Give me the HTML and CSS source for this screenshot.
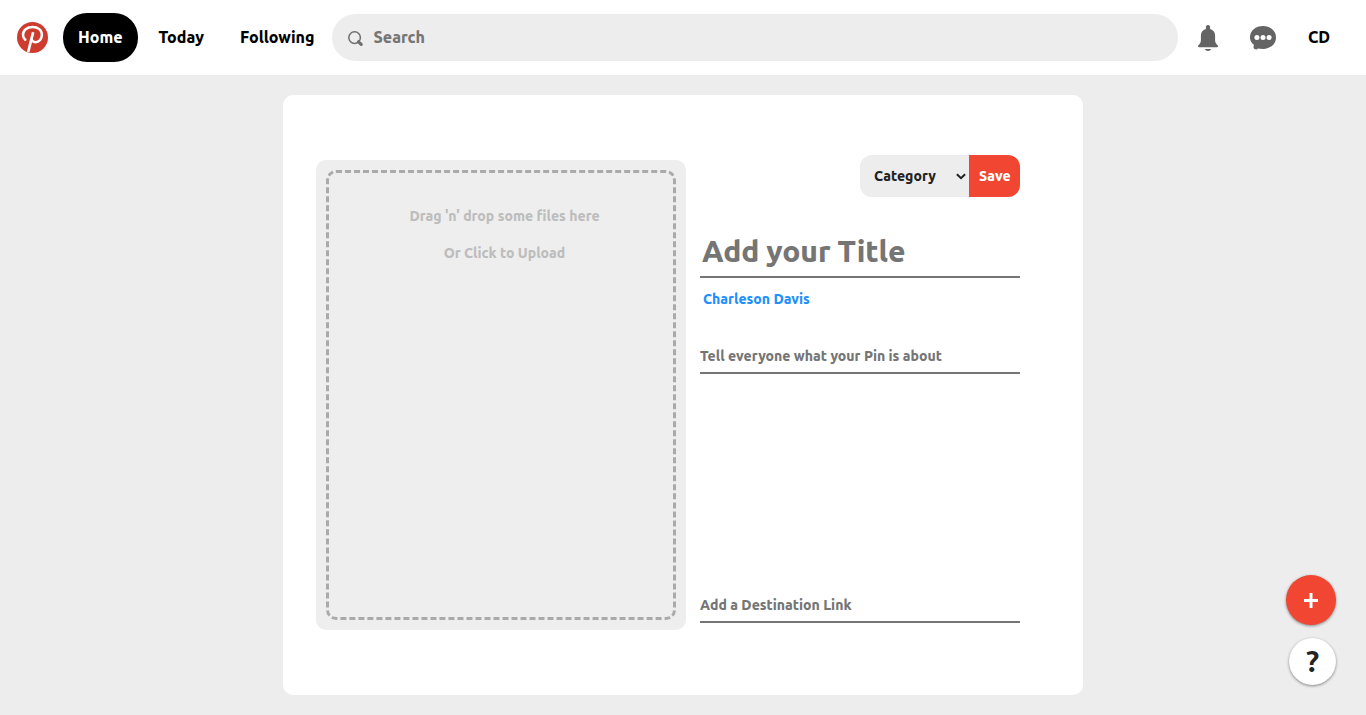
FILE: index.html
```html
<!DOCTYPE html>
<html lang="en">
<head>
<meta charset="utf-8">
<title>Pin Builder</title>
<link rel="stylesheet" href="styles.css">
</head>
<body>
<header class="navbar">
  <a class="logo" aria-label="Home">
    <svg width="31" height="31" viewBox="0 0 31 31"><circle cx="15.500" cy="15.500" r="15.500" fill="#cd3c2e"/><g fill="none" stroke="#fff" stroke-linecap="round" stroke-linejoin="round"><path stroke-width="2.500" d="M8.300 17.700C6.600 16.200 6 14.600 6 12.700 6 8.300 10 5 15.600 5c5.400 0 9.300 3.100 9.300 7.700 0 4.300-2.800 7.500-6.300 7.500-1.900 0-3.300-1.100-3.900-2.600"/><path stroke-width="2.700" stroke-linecap="butt" d="M16.100 10.200L11.200 30"/></g></svg>
  </a>
  <a class="home"><span>Home</span></a>
  <a class="today"><span>Today</span></a>
  <a class="following"><span>Following</span></a>
  <div class="search">
    <svg width="16" height="16" viewBox="0 0 16 16" fill="none" stroke="#6f6f6f"><circle cx="6.6" cy="6.6" r="5.8" stroke-width="1.5"/><path d="M10.500 10.800L13.200 13.400" stroke-width="3.200" stroke-linecap="round"/></svg>
    <span>Search</span>
  </div>
  <svg class="bell" width="20" height="26" viewBox="0 0 20 26" fill="#646464"><path d="M10 0c1.250 0 2.100.9 2.100 2.100v1.900c3.300.9 5 3.400 5 6.600v4.400c0 2.300.6 3.600 2.500 5.200.8.8.4 2.100-.8 2.100H1.200C0 22.300-.4 21 .4 20.200 2.300 18.600 2.900 17.300 2.900 15v-4.400C2.900 7.400 4.600 4.900 7.900 4V2.100C7.900.9 8.750 0 10 0z"/><path d="M6.800 24h6.400c-.6 1.300-1.700 1.900-3.200 1.900S7.400 25.300 6.800 24z"/></svg>
  <svg class="chat" width="26" height="24" viewBox="0 0 26 24"><path fill="#646464" d="M13 .1C20.300.1 26 4.900 26 11.400S20.300 22.900 13 22.900c-2 0-3.700-.4-5.300-.4 0 .5-.5 1.000-1.500.9-1.100-.1-2.700-.9-2.700-2l.3-2.600C1.400 16.900 0 14.400 0 11.400 0 4.900 5.700.1 13 .1z"/><g fill="#fff"><circle cx="6.900" cy="11.400" r="2.500"/><circle cx="13" cy="11.400" r="2.500"/><circle cx="19.100" cy="11.400" r="2.500"/></g></svg>
  <span class="user">CD</span>
</header>
<main class="card">
  <section class="upload">
    <div class="dropzone">
      <p>Drag 'n' drop some files here</p>
      <p>Or Click to Upload</p>
    </div>
  </section>
  <section class="form">
    <div class="actions">
      <div class="category"><span>Category</span>
        <svg width="10" height="7" viewBox="0 0 10 7" fill="none" stroke="#222" stroke-width="2"><path d="M.9 1.200L5 5.200 9.100 1.200"/></svg>
      </div>
      <div class="save"><span>Save</span></div>
    </div>
    <div class="title-field"><span>Add your Title</span></div>
    <div class="author"><span>Charleson Davis</span></div>
    <div class="field"><span>Tell everyone what your Pin is about</span></div>
    <div class="field link-field"><span>Add a Destination Link</span></div>
  </section>
</main>
<aside class="floating">
  <div class="fab add"><svg width="14" height="15" viewBox="0 0 14 15"><path d="M7 0v15M0 7.500h14" stroke="#fff" stroke-width="3"/></svg></div>
  <div class="fab help"><span>?</span></div>
</aside>
</body>
</html>
```
FILE: styles.css
```css
* { box-sizing: border-box; }
body {
  margin: 0;
  height: 715px;
  overflow: hidden;
  background: #ededed;
  font-family: Ubuntu, "Noto Sans", sans-serif;
  font-weight: 800;
  font-size: 14px;
  line-height: 20px;
}
svg { display: block; flex: none; }
span { white-space: nowrap; }
.navbar {
  display: flex;
  align-items: center;
  height: 75px;
  padding-left: 17px;
  background: #fff;
  color: #000;
  font-size: 16px;
}
.navbar span { padding-bottom: 2px; }
.home {
  display: flex;
  align-items: center;
  width: 75px;
  height: 49px;
  margin-left: 15px;
  padding-left: 15px;
  border-radius: 24px;
  background: #000;
  color: #fff;
}
.today, .following { display: flex; align-items: center; }
.today { width: 82px; padding-left: 20.5px; }
.following { width: 112px; padding-left: 20px; }
.search {
  display: flex;
  align-items: center;
  gap: 9.5px;
  width: 846px;
  height: 47px;
  padding-left: 16px;
  border-radius: 24px;
  background: #ededed;
  color: #757575;
}
.search svg { margin-top: 2px; }
.bell { margin-left: 20px; margin-top: 1px; }
.chat { margin-left: 32px; }
.user { margin-left: 32px; }
.card {
  display: flex;
  width: 800px;
  height: 600px;
  margin: 20px 0 0 283px;
  padding: 60px 63px 0 33px;
  border-radius: 10px;
  background: #fff;
}
.upload {
  width: 370px;
  height: 470px;
  margin-top: 5px;
  padding: 10px;
  border-radius: 10px;
  background: #eee;
}
.dropzone {
  height: 450px;
  padding: 33px 0 0 7px;
  border: 3px dashed #aaa;
  border-radius: 10px;
  color: #bdbdbd;
  text-align: center;
}
.dropzone p { margin: 0 0 17px; }
.form { width: 320px; margin-left: 14px; }
.actions { display: flex; justify-content: flex-end; height: 42px; }
.category {
  display: flex;
  align-items: center;
  justify-content: space-between;
  width: 109px;
  padding: 0 3px 0 14px;
  border-radius: 12px 0 0 12px;
  background: #ededed;
  color: #222;
}
.save {
  display: flex;
  align-items: center;
  width: 51px;
  padding-left: 10px;
  border-radius: 0 12px 12px 0;
  background: #f04632;
  color: #fff;
}
.title-field {
  height: 51px;
  margin-top: 30px;
  padding: 4px 0 0 2px;
  border-bottom: 2px solid #757575;
  color: #757575;
  font-size: 30px;
  line-height: 40px;
  letter-spacing: -0.1px;
}
.author { margin-top: 11px; padding-left: 3px; color: #1e90ff; }
.field {
  height: 28px;
  margin-top: 37px;
  border-bottom: 2px solid #757575;
  color: #757575;
}
.link-field { margin-top: 221px; }
.floating {
  position: absolute;
  top: 575px;
  right: 30px;
  display: flex;
  flex-direction: column;
  align-items: flex-end;
  gap: 13px;
}
.fab {
  display: flex;
  align-items: center;
  justify-content: center;
  border-radius: 50%;
  box-shadow: 0 1px 3px rgba(0, 0, 0, .45);
}
.add { width: 50px; height: 50px; padding-top: 1px; background: #f04632; }
.help { width: 47px; height: 47px; padding-bottom: 2px; background: #fff; color: #222; font-size: 30px; font-weight: 600; line-height: 46px; }
```
